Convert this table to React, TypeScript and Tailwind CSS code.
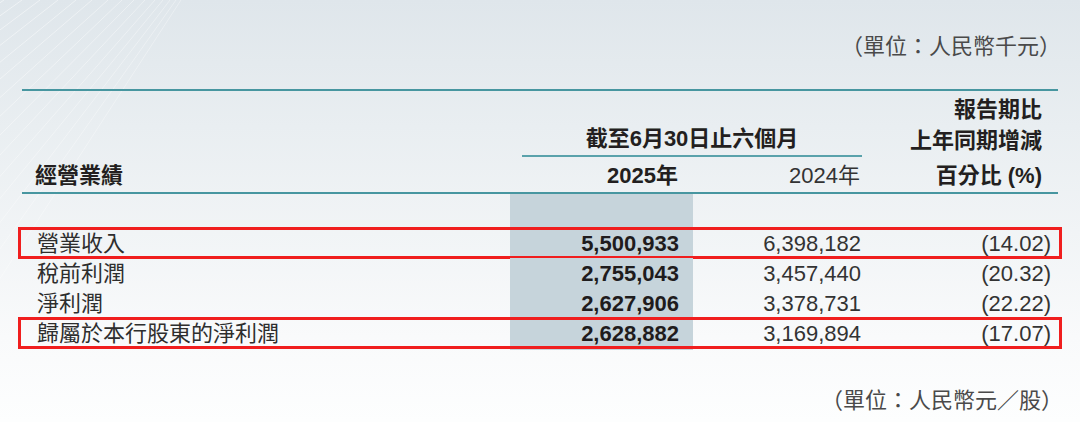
import React from "react";

const rows = [
  { label: "營業收入", a: "5,500,933", b: "6,398,182", c: "(14.02)", hl: true },
  { label: "稅前利潤", a: "2,755,043", b: "3,457,440", c: "(20.32)", hl: false },
  { label: "淨利潤", a: "2,627,906", b: "3,378,731", c: "(22.22)", hl: false },
  { label: "歸屬於本行股東的淨利潤", a: "2,628,882", b: "3,169,894", c: "(17.07)", hl: true },
];

function Lines() {
  const items = [] as { x1: number; x2: number }[];
  const tops = [4, 22, 40, 58, 76, 92, 108, 122, 134, 145, 155, 163, 170, 176, 181];
  tops.forEach((t, i) => {
    const k = 1.45 - (i / (tops.length - 1)) * 0.8;
    items.push({ x1: t, x2: t - 280 * k });
  });
  return (
    <svg className="absolute left-0 top-0 pointer-events-none" width="260" height="280" viewBox="0 0 260 280">
      {items.map((l, i) => (
        <line key={"b" + i} x1={l.x1} y1={0} x2={l.x2} y2={280} stroke="#ffffff" strokeOpacity={0.5 - i * 0.012} strokeWidth="1" />
      ))}
    </svg>
  );
}

export default function App() {
  return (
    <div className="relative w-[1080px] h-[422px] overflow-hidden bg-[linear-gradient(180deg,#dfe6eb_0%,#e9eef1_30%,#f1f4f6_55%,#f9fafb_80%,#fdfefe_100%)] font-['Liberation_Sans','Noto_Sans_CJK_TC',sans-serif] text-[#2a2a2a]">
      <Lines />
      <div className="relative">
        <div className="pt-[29px] pr-[19px] text-right text-[22px] leading-[30px] text-[#4a4a4a] font-['Noto_Sans_CJK_TC',sans-serif]">
          （單位：人民幣千元）
        </div>

        <div className="ml-[22px] w-[1036px] mt-[30px]">
          {/* header */}
          <div className="grid grid-cols-[488px_183px_169px_196px] items-end h-[105px] border-t-2 border-b-2 border-[#4796a0] text-[22px] font-bold text-[#231f20]">
            <div className="pl-[13px] leading-[32px]">經營業績</div>
            <div className="col-span-2 flex flex-col">
              <div className="ml-[12px] border-b-2 border-[#5aa2ab] text-center leading-[32px]">截至6月30日止六個月</div>
              <div className="grid grid-cols-[183px_169px] mt-[3px] leading-[32px]">
                <div className="text-right pr-[15px]">2025年</div>
                <div className="text-right pr-[2px] font-normal text-[#333]">2024年</div>
              </div>
            </div>
            <div className="flex flex-col text-right pr-[16px]">
              <div className="leading-[30px]">報告期比</div>
              <div className="leading-[32px] mb-[3px]">上年同期增減</div>
              <div className="leading-[32px]">百分比 (%)</div>
            </div>
          </div>

          {/* body */}
          <div className="text-[22px]">
            <div className="grid grid-cols-[488px_183px_169px_196px] h-[34px]">
              <div />
              <div className="bg-[#c6d4db]" />
              <div />
              <div />
            </div>
            {rows.map((r) => (
              <div key={r.label} className="relative grid grid-cols-[488px_183px_169px_196px] h-[30px] leading-[31px]">
                <div className="pl-[15px] text-[#2e2e2e]">{r.label}</div>
                <div className="bg-[#c6d4db] text-right pr-[14px] font-bold text-[#1f1c1d]">{r.a}</div>
                <div className="text-right pr-[1px] text-[#333]">{r.b}</div>
                <div className="text-right pr-[7px] text-[#333]">{r.c}</div>
                {r.hl && (
                  <div className="absolute top-[-1px] bottom-[-1px] left-[-4px] right-[-4px] border-[3px] border-[#f01e1e] pointer-events-none" />
                )}
              </div>
            ))}
            <div className="grid grid-cols-[488px_183px_169px_196px] h-[2px]">
              <div />
              <div className="bg-[#c6d4db]" />
              <div />
              <div />
            </div>
          </div>
        </div>

        <div className="mt-[33px] pr-[17px] text-right text-[22px] leading-[30px] text-[#4a4a4a] font-['Noto_Sans_CJK_TC',sans-serif]">
          （單位：人民幣元／股）
        </div>
      </div>
    </div>
  );
}
